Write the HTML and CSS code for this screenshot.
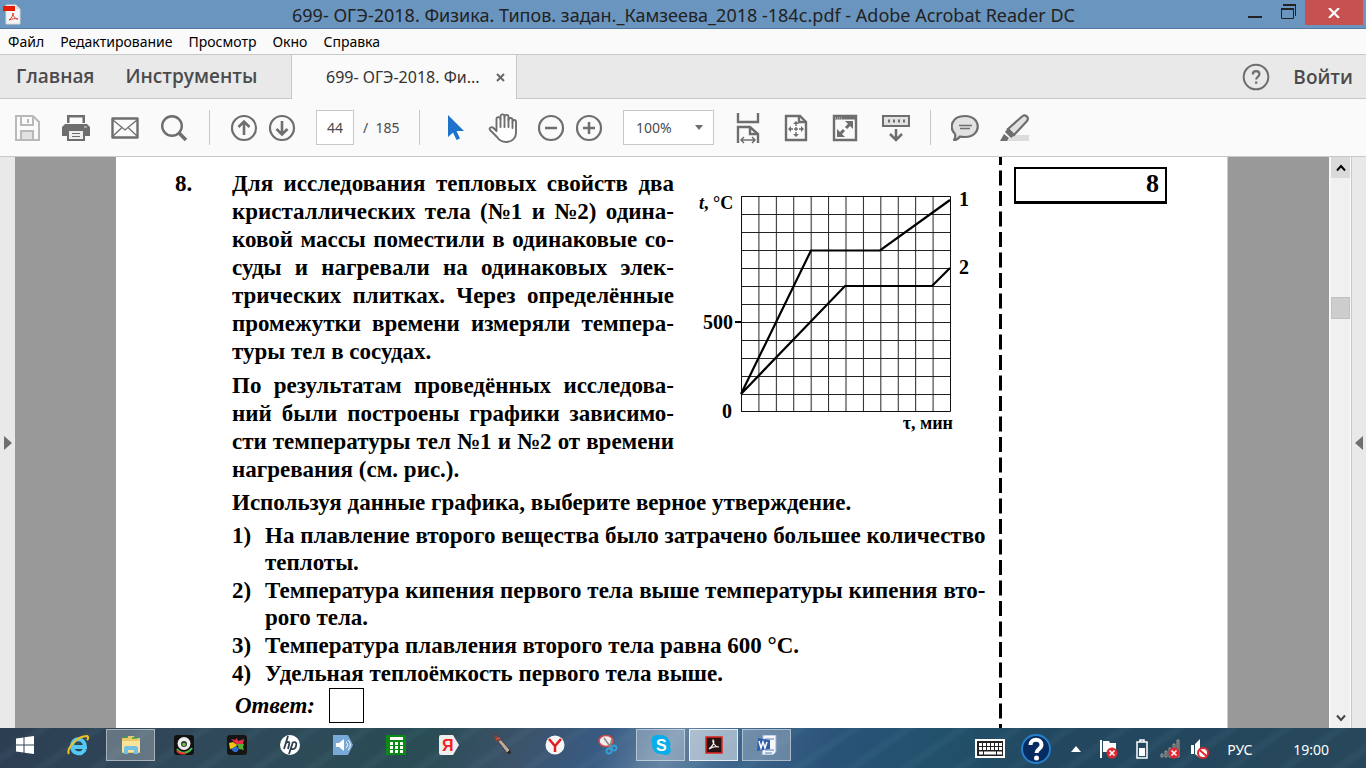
FILE: index.html
```html
<!DOCTYPE html>
<html lang="ru">
<head>
<meta charset="utf-8">
<title>699- ОГЭ-2018. Физика - Adobe Acrobat Reader DC</title>
<link rel="stylesheet" href="styles.css">
</head>
<body>
<header class="titlebar">
  <svg class="app-icon" width="20" height="22" viewBox="0 0 20 22"><path d="M4 1h10l4 4v15H4z" fill="#f6f6f6" stroke="#d8d8d8"/><path d="M14 1v4h4" fill="#ddd"/><path d="M1 2h12v5H1z" fill="#e51c00"/><path d="M7 16c3-2 4-5 4-7 0 3 2 6 5 6-3-1-6 0-9 1z" fill="none" stroke="#e03a2a"/></svg>
  <h1 class="title">699- ОГЭ-2018. Физика. Типов. задан._Камзеева_2018 -184с.pdf - Adobe Acrobat Reader DC</h1>
  <div class="window-buttons">
    <button class="win" aria-label="Свернуть"><svg width="16" height="18" viewBox="0 0 16 18"><path d="M1 14h14" stroke="#222" stroke-width="2"/></svg></button>
    <button class="win" aria-label="Восстановить"><svg width="16" height="16" viewBox="0 0 16 16" fill="none" stroke="#222"><path d="M.5 4.500h12v10H.5z"/><path d="M0 5h13" stroke-width="2"/><path d="M2 1h13" stroke-width="2"/><path d="M14.500 1v11"/></svg></button>
    <button class="win close" aria-label="Закрыть"><svg width="12" height="10" viewBox="0 0 12 10"><path d="M1 0l10 10M11 0L1 10" stroke="#fff" stroke-width="2.200"/></svg></button>
  </div>
</header>
<nav class="menubar">
  <button>Файл</button><button>Редактирование</button><button>Просмотр</button><button>Окно</button><button>Справка</button>
</nav>
<div class="tabs">
  <div class="home-tabs"><button>Главная</button><button>Инструменты</button></div>
  <div class="doc-tab"><span>699- ОГЭ-2018. Фи...</span><button aria-label="Закрыть вкладку"><svg width="9" height="9" viewBox="0 0 9 9"><path d="M1 1l7 7M8 1L1 8" stroke="#666" stroke-width="2"/></svg></button></div>
  <div class="tabs-end">
    <button aria-label="Помощь"><svg width="28" height="28" viewBox="0 0 28 28" fill="none" stroke="#6e6e6e" stroke-width="2"><circle cx="14" cy="14" r="12.300"/><path d="M10.800 11.500c0-4.500 6.600-4.200 6.600-.3 0 2.500-3.200 2.600-3.200 5.300M14.200 18.500v2.300" stroke-width="2.200"/></svg></button>
    <button class="login">Войти</button>
  </div>
</div>
<div class="toolbar">
  <div class="group files">
    <button aria-label="Сохранить"><svg width="28" height="28" viewBox="0 0 28 28" fill="none" stroke="#b9b9b9" stroke-width="2"><path d="M3 2h17l6 6v18H3z"/><path d="M8 2v9h12V2M8 26v-9h12v9"/><path d="M15 5v4"/><path d="M9 18h10v7H9z" fill="#e2e2e2" stroke="none"/></svg></button>
    <button aria-label="Печать"><svg width="28" height="28" viewBox="0 0 28 28" fill="#6e6e6e"><path d="M3 10h22l3 3v9h-5v-5H5v5H0v-9z"/><path d="M5 1h18v8h-2.500V3.500h-13V9H5zM5 16h18v11H5z"/><path d="M7 17h14v8H7z" fill="#eee"/><path d="M10 19.500h8M10 22.500h8" stroke="#6e6e6e"/><path d="M22 13h3" stroke="#ddd"/></svg></button>
    <button aria-label="Письмо"><svg width="28" height="28" viewBox="0 0 28 28" fill="none" stroke="#6e6e6e"><path d="M1.500 4.500h25v19h-25z" stroke-width="2.400" stroke-linejoin="round"/><path d="M2 6l12 10L26 6M2 22l8.500-8M26 22l-8.500-8" stroke-width="1.300"/></svg></button>
    <button aria-label="Найти"><svg width="28" height="28" viewBox="0 0 28 28" fill="none" stroke="#6e6e6e"><circle cx="12" cy="12" r="9.800" stroke-width="2.400"/><path d="M19 19l7 7" stroke-width="3.500"/></svg></button>
  </div>
  <div class="group pages">
    <button aria-label="Предыдущая страница"><svg width="28" height="28" viewBox="0 0 28 28" fill="none" stroke="#6e6e6e" stroke-width="2.200"><circle cx="14" cy="14" r="12"/><path d="M14 21V8M8.500 13L14 7.500l5.500 5.500" stroke-width="2.600"/></svg></button>
    <button aria-label="Следующая страница"><svg width="28" height="28" viewBox="0 0 28 28" fill="none" stroke="#6e6e6e" stroke-width="2.200"><circle cx="14" cy="14" r="12"/><path d="M14 7v13M8.500 15l5.500 5.500 5.500-5.500" stroke-width="2.600"/></svg></button>
    <label class="page-field"><input type="text" value="44" aria-label="Номер страницы"><span>/&nbsp; 185</span></label>
  </div>
  <div class="group view">
    <button aria-label="Выбор"><svg width="18" height="28" viewBox="0 0 18 28"><path d="M1 1v22l5-4.500L9.500 26l3.500-1.500-3.500-7.500H17z" fill="#1f72cc"/></svg></button>
    <button class="hand" aria-label="Рука"><svg width="30" height="30" viewBox="0 0 30 30" fill="#fff" stroke="#6e6e6e" stroke-width="1.900" stroke-linejoin="round" stroke-linecap="round"><path d="M8.500 18V6c0-2.500 4-2.500 4 0V3.500c0-2.800 4-2.800 4 0V4c0-3 4-2.600 4 0v3c0-2.600 4-2.600 4 0v2c0-2.600 3.500-2.600 3.500 0v11c0 5-4 9-10 9-4 0-7-2-9-5L2 17c-1.500-2.500 2-3.500 3.500-2L8.500 18z"/><path d="M12.500 6v8M16.500 4v10M20.500 6v8M24.500 9v6" fill="none"/></svg></button>
    <button aria-label="Уменьшить"><svg width="28" height="28" viewBox="0 0 28 28" fill="none" stroke="#6e6e6e" stroke-width="2.200"><circle cx="14" cy="14" r="12"/><path d="M8 14h12" stroke-width="2.500"/></svg></button>
    <button aria-label="Увеличить"><svg width="28" height="28" viewBox="0 0 28 28" fill="none" stroke="#6e6e6e" stroke-width="2.200"><circle cx="14" cy="14" r="12"/><path d="M8 14h12M14 8v12" stroke-width="2.500"/></svg></button>
    <span class="zoom"><select aria-label="Масштаб"><option>100%</option></select><svg width="10" height="6" viewBox="0 0 10 6"><path d="M1 0h8L5 5z" fill="#6e6e6e"/></svg></span>
    <div class="fit">
      <button aria-label="По ширине"><svg width="24" height="32" viewBox="0 0 24 32" fill="none" stroke="#6e6e6e" stroke-width="2"><path d="M2 1v9h20V1" stroke-width="2.400"/><path d="M2 31V15h12l8 7v9M14 15v7h8" stroke-width="2.400"/><path d="M6 28h12M8 25l-3 3 3 3M16 25l3 3-3 3" stroke-width="1.500"/></svg></button>
      <button aria-label="Страница целиком"><svg width="24" height="28" viewBox="0 0 24 28" fill="none" stroke="#6e6e6e" stroke-width="2.400"><path d="M2 2h14l6 6v18H2z"/><path d="M15 2v6h7"/><path d="M12 8v14M5 15h14" stroke-width="1.400" stroke-dasharray="4 1 4 1 4"/><path d="M12 7l-3 3h6zM12 23l-3-3h6zM4 15l3-3v6zM20 15l-3-3v6z" fill="#6e6e6e" stroke="none"/></svg></button>
      <button aria-label="Во весь экран"><svg width="26" height="28" viewBox="0 0 26 28" fill="none" stroke="#6e6e6e" stroke-width="2.400"><path d="M2 2h22v24H2z"/><path d="M2 4h22" stroke-width="3"/><path d="M3 4h7" stroke="#ddd" stroke-width="1" stroke-dasharray="1 1"/><path d="M7 21l5-5M14 14l5-5" stroke-width="3"/><path d="M13 7h8v8zM5 15v8h8z" fill="#6e6e6e" stroke="none"/></svg></button>
      <button aria-label="Панель"><svg width="28" height="28" viewBox="0 0 28 28" fill="none" stroke="#6e6e6e" stroke-width="2"><path d="M1 2h26v10H1z" fill="#e2e2e2"/><path d="M6 7h17" stroke-width="3" stroke-dasharray="2 3"/><path d="M14 15v11M8 20l6 6 6-6" stroke-width="2.500"/></svg></button>
    </div>
  </div>
  <div class="group notes">
    <button aria-label="Комментарий"><svg width="28" height="28" viewBox="0 0 28 28" fill="#e2e2e2" stroke="#6e6e6e" stroke-width="2.200" stroke-linejoin="round"><path d="M14 2c17 0 17 21 0 21-2 0-4 0-5-.500C7 25 5 26 3 26c1-2 2-3 1-6C-2 14 0 2 14 2z"/><path d="M8 11.500h13M9 14.500h10" stroke-width="1.300"/></svg></button>
    <button aria-label="Выделение"><svg width="30" height="28" viewBox="0 0 30 28"><path d="M14 21h15v6H7z" fill="#dcdcdc"/><path d="M8 15L22 2.500c3-3 8 1 5 4.500L14 21z" fill="#e2e2e2" stroke="#6e6e6e" stroke-width="2.200"/><path d="M8 14l7 7-4 3-6-6zM4 20l5 4-2 3H0z" fill="#6e6e6e"/></svg></button>
  </div>
</div>
<main class="workspace">
  <button class="rail" aria-label="Левая панель"><svg width="8" height="14" viewBox="0 0 8 14"><path d="M0 0l8 7-8 7z" fill="#6e6e6e"/></svg></button>
  <div class="canvas">
    <article class="sheet">
      <div class="number">8.</div>
      <section class="task">
        <div class="intro">
          <div class="prose">
            <p>Для исследования тепловых свойств два<br>кристаллических тела <span class="unit-group">(№1</span> и <span class="unit-group">№2)</span> одина-<br>ковой массы поместили в одинаковые со-<br>суды и нагревали на одинаковых элек-<br>трических плитках. Через определённые<br>промежутки времени измеряли темпера-<br><span class="last">туры тел в сосудах.</span></p>
            <p>По результатам проведённых исследова-<br>ний были построены графики зависимо-<br>сти температуры тел <span class="unit-group">№1</span> и <span class="unit-group">№2</span> от времени<br><span class="last">нагревания (см. рис.).</span></p>
          </div>
          <svg class="chart" width="280" height="250" viewBox="700 186 280 250" role="img" aria-label="График температуры от времени">
            <defs><pattern id="grid" x="741" y="196" width="17.417" height="18" patternUnits="userSpaceOnUse"><path d="M0 .5H18M.5 0V18" stroke="#222" fill="none"/></pattern></defs>
            <rect x="741" y="196" width="209" height="216" fill="url(#grid)"/>
            <path d="M741.500 196.500h209v215h-209z" fill="none" stroke="#111"/>
            <path d="M735 322h6" stroke="#000" stroke-width="2"/>
            <path d="M741 394L811 250.500H880L950 200M741 394L845 286H932L950 268" fill="none" stroke="#000" stroke-width="2.200"/>
            <text x="699" y="209" class="unit"><tspan font-style="italic">t</tspan>, °C</text>
            <text x="733" y="329" text-anchor="end">500</text>
            <text x="732" y="418" text-anchor="end">0</text>
            <text x="959" y="206">1</text><text x="959" y="274">2</text>
            <text x="953" y="429" text-anchor="end" class="unit">τ, мин</text>
          </svg>
        </div>
        <p class="question">Используя данные графика, выберите верное утверждение.</p>
        <ol class="options">
          <li><span>1)</span><p>На плавление второго вещества было затрачено большее количество<br><span class="last">теплоты.</span></p></li>
          <li><span>2)</span><p>Температура кипения первого тела выше температуры кипения вто-<br><span class="last">рого тела.</span></p></li>
          <li><span>3)</span><p class="last">Температура плавления второго тела равна 600 °C.</p></li>
          <li><span>4)</span><p class="last">Удельная теплоёмкость первого тела выше.</p></li>
        </ol>
        <label class="answer"><em>Ответ:</em><input type="text"></label>
      </section>
      <svg class="divider" width="3" height="100%"><line x1="1.500" y1="-7" x2="1.500" y2="100%" stroke="#000" stroke-width="3" stroke-dasharray="15 5.500"/></svg>
      <aside class="score">8</aside>
    </article>
  </div>
  <div class="scrollbar">
    <button aria-label="Вверх"><svg width="10" height="8" viewBox="0 0 10 8"><path d="M1 6.500l4-4.500 4 4.500" fill="none" stroke="#000" stroke-width="2"/></svg></button>
    <div class="track"><div class="thumb"></div></div>
    <button class="down" aria-label="Вниз"><svg width="10" height="8" viewBox="0 0 10 8"><path d="M1 1.500L5 6l4-4.500" fill="none" stroke="#444" stroke-width="2"/></svg></button>
  </div>
  <button class="rail right" aria-label="Правая панель"><svg width="8" height="14" viewBox="0 0 8 14"><path d="M8 0L0 7l8 7z" fill="#6e6e6e"/></svg></button>
</main>
<footer class="taskbar">
  <div class="apps">
    <button aria-label="Пуск"><svg width="18" height="18" viewBox="0 0 18 18" fill="#fff"><path d="M0 2.500L7.500 1.500V8.500H0zM8.500 1.300L18 0v8.500H8.500zM0 9.500h7.500v7L0 15.500zM8.500 9.500H18V18l-9.500-1.300z"/></svg></button>
    <button aria-label="Internet Explorer"><svg width="22" height="22" viewBox="0 0 22 22" fill="none"><path d="M18 15c-3 7-13 5-13-3 0-9 13-9 13 1H7" stroke="#55c8f5" stroke-width="4"/><path d="M2 20C-1 15 10 2 20 2c2 1 1 3 0 4" stroke="#f2c120" stroke-width="2"/></svg></button>
    <button class="open" aria-label="Проводник"><svg width="20" height="20" viewBox="0 0 20 20"><path d="M1 3h5l1-2h6l1 2h5v15H1z" fill="#e8c868"/><path d="M1 6h18v11H1z" fill="#f8e398"/><path d="M3 2h4M11 3h5" stroke="#3b9a4c" stroke-width="1.500"/><path d="M3 19v-6c0-1 1-2 2-2h10c1 0 2 1 2 2v6h-4v-4H7v4z" fill="#72bfe4"/></svg></button>
    <button aria-label="Камера"><svg width="20" height="20" viewBox="0 0 20 20"><rect width="20" height="20" rx="3" fill="#111"/><path d="M3 14c3 5 11 5 15-1" fill="none" stroke="#4cc34a" stroke-width="2"/><path d="M3 16c3 3 7 3 9 2" fill="none" stroke="#e33" stroke-width="2"/><circle cx="10" cy="8.500" r="6.500" fill="#eee"/><circle cx="10" cy="9" r="3" fill="#333"/><circle cx="10" cy="9.500" r="1.800" fill="#6cc247"/></svg></button>
    <button aria-label="Галерея"><svg width="20" height="20" viewBox="0 0 20 20"><rect width="20" height="20" rx="3" fill="#151515"/><path d="M4 4l4 1 2-2 1 3 6-2-1 5-6 1z" fill="#e5304d"/><path d="M2 8l4-1 4 3-2 3-5 1z" fill="#f4c514"/><path d="M10 9l7 0-1 3 1 3-5-1z" fill="#54af32"/><path d="M4 14l5-3 3 3-2 3-3 0z" fill="#326bd0"/></svg></button>
    <button aria-label="HP"><svg width="20" height="20" viewBox="0 0 20 20"><circle cx="10" cy="10" r="10" fill="#fff"/><path d="M8 1L4 14M6 8c3-2 4-1 3 2l-1 4M13 7l-4 12M12 8c4-2 5 0 4 3-1 4-3 3-5 3" fill="none" stroke="#2b3e4b" stroke-width="1.800"/></svg></button>
    <button aria-label="Звук"><svg width="20" height="20" viewBox="0 0 20 20"><path d="M0 0h15l5 10-5 10H0z" fill="#78a9d7"/><path d="M3 8h3l5-4v12l-5-4H3z" fill="#fff"/><path d="M13 7c2 2 2 4 0 6M15 5c3 3 3 7 0 10" fill="none" stroke="#fff"/></svg></button>
    <button aria-label="Калькулятор"><svg width="20" height="20" viewBox="0 0 20 20"><path d="M0 0h20v20H0z" fill="#078b13"/><path d="M4 2h13v3H4zM4 7h3v3H4zM9 7h3v3H9zM14 7h3v3h-3zM4 11h3v3H4zM9 11h3v3H9zM14 11h3v3h-3zM4 15h3v3H4zM9 15h3v3H9zM14 15h3v3h-3z" fill="#fff"/></svg></button>
    <button aria-label="Яндекс"><svg width="20" height="20" viewBox="0 0 20 20"><path d="M0 2q0-2 2-2h12l6 10-6 10H2q-2 0-2-2z" fill="#eee"/><text x="3" y="16" class="ya">Я</text></svg></button>
    <button aria-label="Перо"><svg width="22" height="22" viewBox="0 0 22 22"><path d="M2 1l4 0 13 15-3 3z" fill="#bba99c" stroke="#403b3b"/><path d="M2 1l4 0 4 5-4 3z" fill="#634b4a"/><path d="M5 5l4-1" stroke="#e34234" stroke-width="2"/><path d="M19 16l1 4-4-1z" fill="#222"/></svg></button>
    <button aria-label="Яндекс Браузер"><svg width="20" height="20" viewBox="0 0 20 20"><circle cx="10" cy="10" r="9.500" fill="#f5f5f5"/><path d="M4 4l6 7 6-7M10 10v7" fill="none" stroke="#e01d22" stroke-width="2.500"/></svg></button>
    <button aria-label="Ножницы"><svg width="20" height="20" viewBox="0 0 20 20"><ellipse cx="8" cy="6" rx="7" ry="5.500" fill="#eee" stroke="#d44" stroke-width="1.500"/><path d="M6 3l8 11M14 4l-3 10" stroke="#888" stroke-width="1.500"/><g fill="none" stroke="#35a0d8" stroke-width="1.800"><circle cx="11" cy="16" r="2.500"/><circle cx="16" cy="13" r="2.500"/></g></svg></button>
    <button class="open" aria-label="Skype"><svg width="20" height="20" viewBox="0 0 20 20"><path d="M6 0c3-1 11 0 13 7 1 3 0 4 0 5 3 6-3 10-8 7C4 20 0 13 1 8-1 4 2 0 6 0z" fill="#08aeea"/><text x="5" y="16" class="skype">S</text></svg></button>
    <button class="open active" aria-label="Adobe Reader"><svg width="18" height="18" viewBox="0 0 18 18"><path d="M1 1h16v16H1z" fill="#291415" stroke="#de241b" stroke-width="1.500"/><path d="M4 13c4-3 6-7 4-9-1 2 2 7 6 7-3-1-7 0-10 2z" fill="none" stroke="#eee" stroke-width="1.200"/></svg></button>
    <button class="open" aria-label="Word"><svg width="20" height="20" viewBox="0 0 20 20"><path d="M6 0h13v17l-3 3H5z" fill="#f5f7fb" stroke="#91aad1"/><path d="M8 4h9M8 15h9M8 18h7" stroke="#557db9"/><path d="M1 3l12 2v9L0 16z" fill="#315eaa"/><path d="M2 6l2 7 2-6 2 6 2-6" fill="none" stroke="#fff" stroke-width="1.500"/></svg></button>
  </div>
  <div class="tray">
    <svg class="keyboard" width="30" height="20" viewBox="0 0 30 20"><path d="M1 1h28v17H1z" fill="#222" stroke="#fff" stroke-width="2"/><path d="M4 5.500h23M4 9.500h23" stroke="#fff" stroke-width="3" stroke-dasharray="3 1"/><path d="M4 14h4M9 14h12M22 14h5" stroke="#fff" stroke-width="3"/></svg>
    <svg class="help" width="30" height="30" viewBox="0 0 30 30"><circle cx="15" cy="15" r="14" fill="#082b61" stroke="#2581cc" stroke-width="2"/><path d="M9.500 11c0-7 11-7 11 0 0 4-5 4-5 8" fill="none" stroke="#fff" stroke-width="4"/><circle cx="15.500" cy="24" r="2.500" fill="#fff"/></svg>
    <svg width="10" height="6" viewBox="0 0 10 6"><path d="M5 0l5 6H0z" fill="#fff"/></svg>
    <svg width="19" height="20" viewBox="0 0 19 20"><path d="M2 1v18" stroke="#fff" stroke-width="2"/><path d="M4 2h6l1 2h6v9H4z" fill="#fff"/><circle cx="13" cy="14" r="5.500" fill="#df2831"/><path d="M10.500 11.500l5 5M15.500 11.500l-5 5" stroke="#fff" stroke-width="1.500"/></svg>
    <svg width="12" height="20" viewBox="0 0 12 20"><path d="M1 3h10v16H1zM4 1h4v2H4z" fill="none" stroke="#fff" stroke-width="1.500"/><path d="M3 9h6v8H3z" fill="#fff"/></svg>
    <svg class="signal" width="20" height="20" viewBox="0 0 20 20"><path d="M1 15h2v3H1zM5 12h2v6H5zM9 9h2v9H9zM13 5h2v13h-2zM17 1h2v17h-2z" fill="#555" stroke="#999"/><circle cx="14" cy="14" r="5.500" fill="#df2831"/><path d="M11.500 11.500l5 5M16.500 11.500l-5 5" stroke="#fff" stroke-width="1.500"/></svg>
    <svg width="18" height="20" viewBox="0 0 18 20"><path d="M0 6h3v9H0zM4 5l5-5v19l-5-4z" fill="#fff"/><circle cx="12" cy="14" r="5" fill="#fff" stroke="#df2831" stroke-width="2"/><path d="M8.500 11l7 6" stroke="#df2831" stroke-width="2"/></svg>
    <span class="lang">РУС</span><time>19:00</time>
  </div>
</footer>
</body>
</html>
```
FILE: styles.css
```css
* { box-sizing: border-box; }
body { margin: 0; min-height: 100vh; display: flex; flex-direction: column; font-family: "Noto Sans", "Open Sans", sans-serif; background: #fafafa; color: #222; }
button { border: 0; padding: 0; margin: 0; background: none; font: inherit; color: inherit; display: flex; align-items: center; justify-content: center; white-space: nowrap; }
svg { flex: none; display: block; }
p, h1, ol { margin: 0; padding: 0; }

.titlebar { height: 29px; display: flex; background: #6a95bf; border-bottom: 1px solid #527aa5; }
.app-icon { margin: 4px 0 0 2px; }
.title { flex: 1; padding-left: 98px; text-align: center; font-weight: 400; font-size: 18px; line-height: 30px; white-space: nowrap; }
.window-buttons { display: flex; align-items: flex-start; gap: 18px; }
.win { height: 24px; }
.win.close { width: 58px; height: 25px; background: #c75050; margin: 0 3px 0 -10px; }

.menubar { height: 26px; display: flex; gap: 16px; padding-left: 8px; border-bottom: 1px solid #c8c8c8; font-size: 14px; color: #000; }
.tabs { height: 44px; display: flex; background: #e9e9e9; font-size: 19px; color: #4b4b4b; }
.home-tabs { width: 292px; display: flex; gap: 31px; padding: 0 0 2px 16px; border-right: 1px solid #c8c8c8; border-bottom: 1px solid #c8c8c8; font-family: "Open Sans", sans-serif; font-weight: 600; }
.doc-tab { width: 224px; display: flex; align-items: center; justify-content: space-between; padding: 0 11px 0 34px; background: #fafafa; font-size: 16px; color: #333; white-space: nowrap; }
.tabs-end { flex: 1; display: flex; justify-content: flex-end; gap: 23px; padding-right: 13px; border-left: 1px solid #c8c8c8; border-bottom: 1px solid #c8c8c8; font-family: "Open Sans", sans-serif; font-weight: 600; }

.toolbar { height: 58px; display: flex; align-items: center; border-bottom: 1px solid #c8c8c8; font-size: 14px; color: #4b4b4b; }
.group { height: 35px; display: flex; align-items: center; border-right: 1px solid #c8c8c8; }
.files { width: 210px; gap: 21px; padding-left: 13px; }
.pages { width: 210px; gap: 10px; padding-left: 20px; }
.page-field { display: flex; align-items: center; gap: 9px; margin-left: 10px; white-space: nowrap; }
.page-field input { width: 38px; height: 35px; padding: 0; border: 1px solid #c8c8c8; text-align: center; font: inherit; color: inherit; background: #fff; }
.view { width: 511px; gap: 10px; padding-left: 27px; }
.hand { margin: 0 9px 0 13px; }
.zoom { display: flex; align-items: center; margin-left: 10px; width: 91px; height: 35px; padding-right: 9px; border: 1px solid #c8c8c8; background: #fff; }
.zoom select { appearance: none; flex: 1; min-width: 0; border: 0; padding: 0 0 0 12px; background: none; font: inherit; color: inherit; }
.fit { display: flex; align-items: center; gap: 24px; margin-left: 12px; }
.notes { border: 0; gap: 21px; padding-left: 20px; }

.workspace { flex: 1; min-height: 0; display: flex; background: #e9e9e9; }
.rail { width: 15px; }
.right { border-left: 1px solid #c8c8c8; }
.canvas { flex: 1; padding: 0 101px; background: #999; }
.sheet { height: 100%; display: flex; background: #fff; color: #000; font-family: "Liberation Serif", serif; font-size: 23px; line-height: 28px; font-weight: 700; border-right: 1px solid #ccc; }
.number { width: 116px; padding: 13px 0 0 59px; }
.task { width: 753px; padding-top: 13px; }
.intro { display: flex; gap: 26px; }
.prose { width: 442px; display: flex; flex-direction: column; gap: 6px; text-align: justify; text-align-last: justify; white-space: nowrap; }
.unit-group { display: inline-block; }
.last { display: block; text-align-last: left; }
.chart { margin-top: 16px; font-size: 20px; overflow: visible; }
.unit { font-size: 18px; }
.question { margin-top: 5px; }
.options { list-style: none; display: grid; gap: 1px; margin-top: 5px; line-height: 27px; white-space: nowrap; }
.options li { display: flex; }
.options li > span { width: 33px; }
.options li > p { flex: 1; text-align: justify; text-align-last: justify; }
.options li > .last { text-align-last: left; }
.answer { display: flex; align-items: center; gap: 14px; padding-left: 3px; margin-top: 1px; }
.answer input { width: 35px; height: 35px; border: 1px solid #000; background: #fff; }
.divider { margin-left: 14px; }
.score { width: 153px; height: 37px; margin: 10px 0 0 12px; padding-right: 6px; border: 2px solid #000; border-bottom-width: 3px; text-align: right; font-size: 26px; line-height: 30px; }

.scrollbar { width: 22px; display: flex; flex-direction: column; background: #f0f0f0; border-left: 2px solid #f8f8f8; border-right: 1px solid #fafafa; }
.scrollbar button { height: 21px; background: #dadada; }
.scrollbar .down { background: #f0f0f0; }
.track { flex: 1; padding-top: 119px; }
.thumb { height: 22px; background: #cdcdcd; border: 1px solid #c0c0c0; }

.taskbar { height: 40px; display: flex; justify-content: space-between; color: #fff; background: repeating-linear-gradient(145deg, #ffffff00 0 19px, #6ca0b014 24px 27px, #ffffff00 31px), linear-gradient(115deg, #2c3e52 0%, #30495a 15%, #294c55 31%, #3c5269 38%, #385b83 44%, #6685a5 49%, #416990 53%, #2a5278 61%, #22516c 68%, #22475f 77%, #28475b 100%); }
.apps { display: flex; gap: 4px; padding-top: 1px; }
.apps button { width: 49px; height: 32px; border: 1px solid transparent; }
.apps .open { background: #ffffff42; border-color: #ffffff70; }
.apps .active { background: #ffffff80; border-color: #ffffffc0; }
.ya { font: 700 16px "Liberation Sans", sans-serif; fill: #e22; }
.skype { font: 700 16px "Liberation Sans", sans-serif; fill: #fff; }
.tray { display: flex; align-items: center; gap: 18px; padding: 2px 37px 0 0; font-size: 14px; }
.keyboard { margin-right: -2px; }
.help { margin-right: 2px; }
.signal { margin: 0 -7px 0 -6px; }
.lang { width: 28px; }
.tray time { margin-left: 20px; }
```
